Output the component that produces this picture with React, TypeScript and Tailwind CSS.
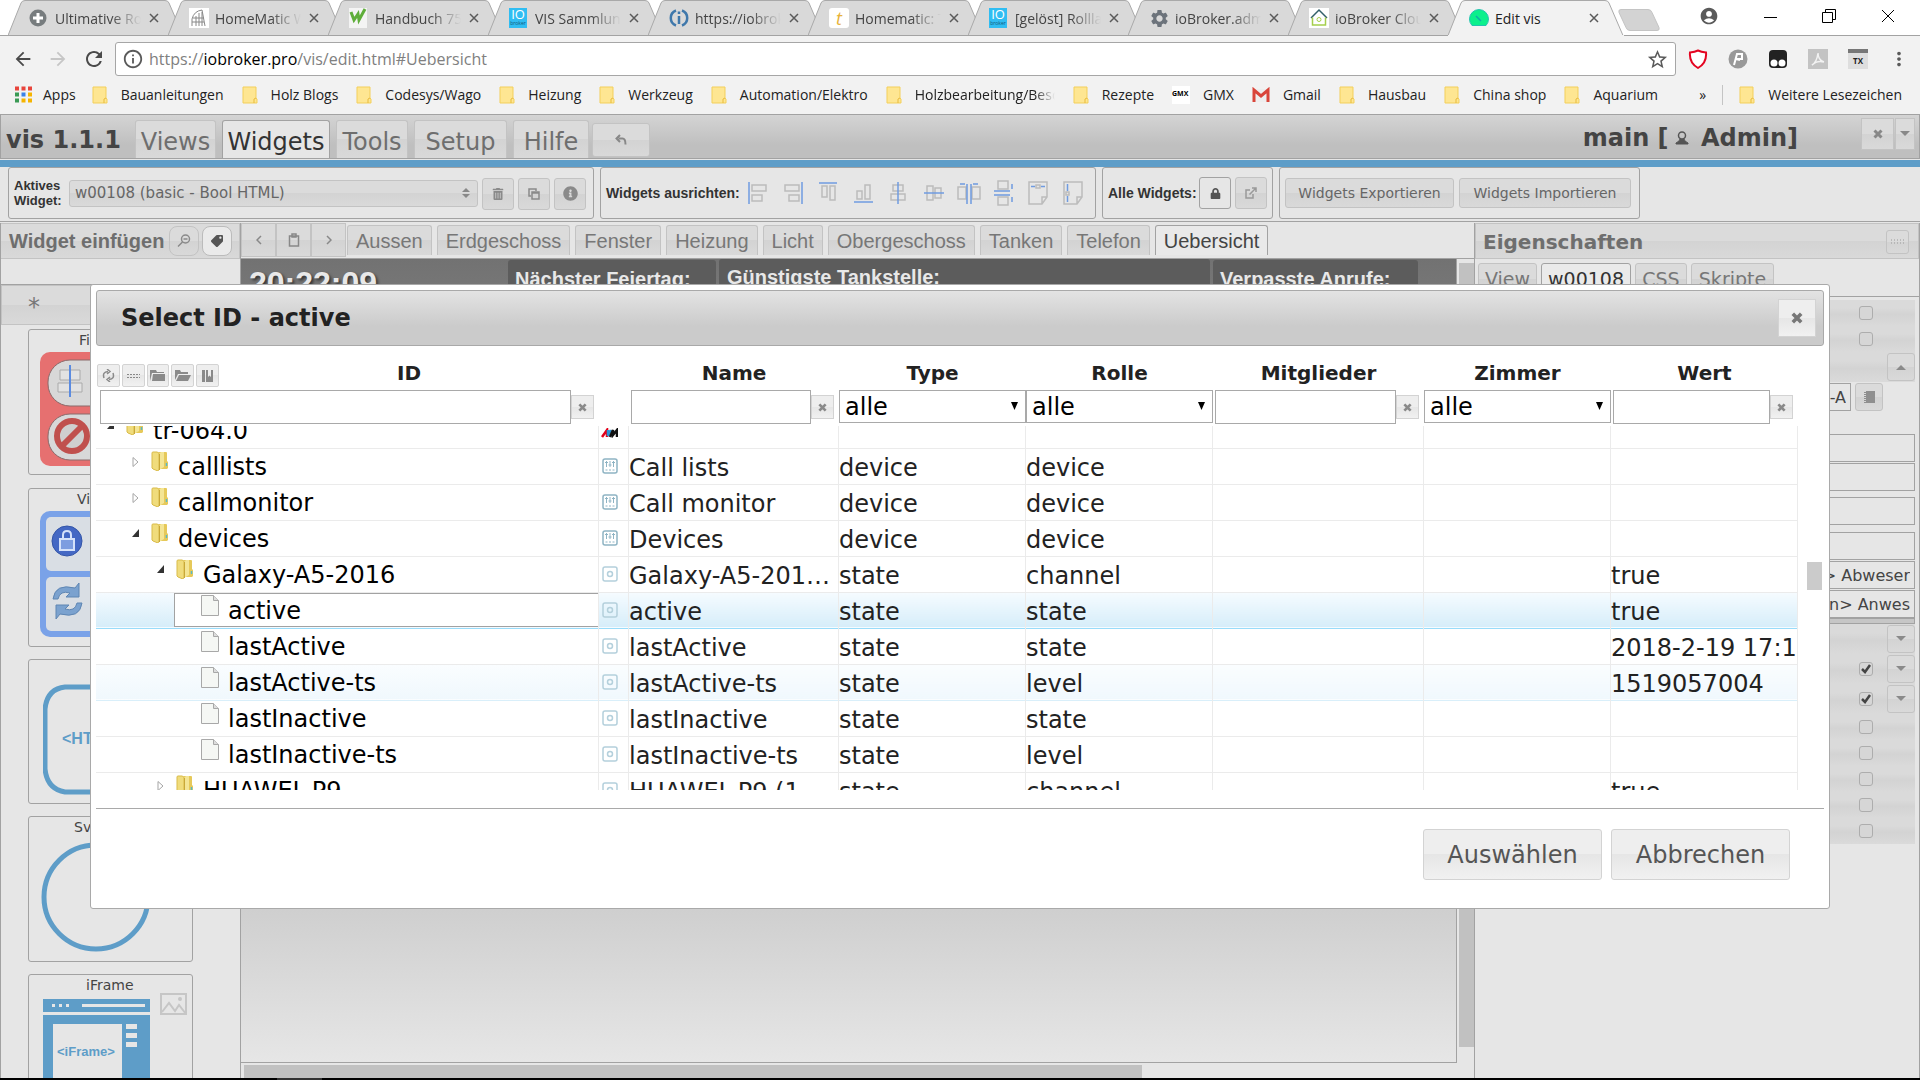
import { ReactNode, useState } from "react";
import { clsx } from "clsx";
import { MdAccountCircle, MdArrowBack, MdArrowForward, MdRefresh, MdInfoOutline, MdStarBorder, MdMoreVert, MdSettings } from "react-icons/md";
import { FaTrashAlt, FaInfoCircle, FaLock, FaTag } from "react-icons/fa";

const glass = "bg-[linear-gradient(#dbdbdb_50%,#d3d3d3_50%,#d9d9d9)] border border-[#c3c3c3]";
const lightGlass = "bg-[linear-gradient(#eeeeee_50%,#e6e6e6_50%,#f1f1f1)] border border-[#d3d3d3]";

const browserTabs = [
  { title: "Ultimative Rollladen", icon: "plus" },
  { title: "HomeMatic WebUI", icon: "arch" },
  { title: "Handbuch 75", icon: "w" },
  { title: "VIS Sammlung", icon: "io" },
  { title: "https://iobroker", icon: "info" },
  { title: "Homematic: T", icon: "t" },
  { title: "[gelöst] Rollladen", icon: "io" },
  { title: "ioBroker.admin", icon: "gear" },
  { title: "ioBroker Cloud", icon: "house" },
  { title: "Edit vis", icon: "vis", active: true },
];

const bookmarks = [
  { name: "Bauanleitungen" },
  { name: "Holz Blogs" },
  { name: "Codesys/Wago" },
  { name: "Heizung" },
  { name: "Werkzeug" },
  { name: "Automation/Elektro" },
  { name: "Holzbearbeitung/Besch", fade: true },
  { name: "Rezepte" },
  { name: "GMX", icon: "gmx" },
  { name: "Gmail", icon: "gmail" },
  { name: "Hausbau" },
  { name: "China shop" },
  { name: "Aquarium" },
];

const menuTabs = [
  { name: "Views", width: "w-[81px]" },
  { name: "Widgets", width: "w-[108px]" },
  { name: "Tools", width: "w-[72px]" },
  { name: "Setup", width: "w-[93px]" },
  { name: "Hilfe", width: "w-[76px]" },
];

const viewTabs = ["Aussen", "Erdgeschoss", "Fenster", "Heizung", "Licht", "Obergeschoss", "Tanken", "Telefon", "Uebersicht"];

type Row = {
  id: string;
  level: number;
  open?: boolean;
  leaf?: boolean;
  kind: "avm" | "device" | "state";
  name: string;
  type: string;
  role: string;
  value: string;
};

const rows: Row[] = [
  { id: "tr-064.0", level: 0, open: true, kind: "avm", name: "", type: "", role: "", value: "" },
  { id: "calllists", level: 1, kind: "device", name: "Call lists", type: "device", role: "device", value: "" },
  { id: "callmonitor", level: 1, kind: "device", name: "Call monitor", type: "device", role: "device", value: "" },
  { id: "devices", level: 1, open: true, kind: "device", name: "Devices", type: "device", role: "device", value: "" },
  { id: "Galaxy-A5-2016", level: 2, open: true, kind: "state", name: "Galaxy-A5-2016 (1", type: "state", role: "channel", value: "true" },
  { id: "active", level: 3, leaf: true, kind: "state", name: "active", type: "state", role: "state", value: "true" },
  { id: "lastActive", level: 3, leaf: true, kind: "state", name: "lastActive", type: "state", role: "state", value: "2018-2-19 17:16" },
  { id: "lastActive-ts", level: 3, leaf: true, kind: "state", name: "lastActive-ts", type: "state", role: "level", value: "1519057004" },
  { id: "lastInactive", level: 3, leaf: true, kind: "state", name: "lastInactive", type: "state", role: "state", value: "" },
  { id: "lastInactive-ts", level: 3, leaf: true, kind: "state", name: "lastInactive-ts", type: "state", role: "level", value: "" },
  { id: "HUAWEI_P9", level: 2, kind: "state", name: "HUAWEI_P9 (1", type: "state", role: "channel", value: "true" },
];

const indents = ["pl-[10px]", "pl-[35px]", "pl-[60px]", "pl-[85px]"];

function Favicon({ icon }: { icon: string }) {
  switch (icon) {
    case "plus":
      return (
        <svg width="18" height="18" viewBox="0 0 18 18">
          <circle cx="9" cy="9" r="8.5" fill="#777c7e" />
          <path d="M9 4v10M4 9h10" stroke="#fff" strokeWidth="3" />
        </svg>
      );
    case "arch":
      return (
        <svg width="20" height="20" viewBox="0 0 20 20">
          <rect width="20" height="20" fill="#fff" />
          <path d="M3 18V11Q5 3 13 2l3 16M7 18V8M10 18V5M13 18V4M3 14h12M4 10h11" stroke="#888" fill="none" />
        </svg>
      );
    case "w":
      return (
        <svg width="18" height="20" viewBox="0 0 18 20">
          <rect width="18" height="20" fill="#f4f4f4" />
          <path d="M2 4l3 8 4-6 1 6 6-11" stroke="#5fae3a" strokeWidth="3" fill="none" />
        </svg>
      );
    case "io":
      return (
        <span className="flex h-5 w-[18px] flex-col items-center bg-[#30bdf2] text-white">
          <span className="text-[13px] leading-[13px]">IO</span>
          <span className="text-[5px] leading-[5px] text-[#125b7c]">broker</span>
        </span>
      );
    case "info":
      return (
        <svg width="20" height="20" viewBox="0 0 20 20" fill="none" stroke="#3f78ab">
          <path d="M7 2.5a8 8 0 0 0 0 15M13 2.500a8 8 0 0 1 0 15" strokeWidth="2.500" />
          <path d="M10 8v8M10 3.500v2.500" strokeWidth="2.500" />
        </svg>
      );
    case "t":
      return (
        <span className="flex h-5 w-5 items-center justify-center rounded-[3px] bg-white text-[18px] leading-[18px] italic text-[#e8b33a]">t</span>
      );
    case "gear":
      return <MdSettings size={21} color="#6c737b" />;
    case "house":
      return (
        <svg width="20" height="20" viewBox="0 0 20 20" fill="none">
          <rect width="20" height="20" fill="#fff" />
          <path d="M2 10l8-8 8 8" stroke="#32606a" strokeWidth="1.500" />
          <path d="M3.500 9.500V17h13V9.500" stroke="#a5cf4c" strokeWidth="1.500" />
          <circle cx="10" cy="11.500" r="2" stroke="#a5cf4c" />
        </svg>
      );
    default:
      return (
        <svg width="20" height="20" viewBox="0 0 20 20">
          <path d="M3 17.500a9.500 9.500 0 1 1 14 0z" fill="#0bf08c" stroke="#22c3b0" />
          <path d="M7 8l5 5" stroke="#1aa" strokeWidth="1.500" />
        </svg>
      );
  }
}

function BookmarkFolder() {
  return (
    <svg width="16" height="18" viewBox="0 0 16 18" className="flex-none">
      <path d="M1 1h13v11l1 1v4H1z" fill="#fee692" stroke="#f3cf5a" />
      <path d="M12 17v-4l2-1" fill="none" stroke="#e8bb3c" />
    </svg>
  );
}

function CloseX({ size = 10 }: { size?: number }) {
  return (
    <svg width={size} height={size} viewBox="0 0 10 10" className="mx-auto">
      <path d="M1.500 1.500l7 7M8.500 1.500l-7 7" stroke="currentColor" strokeWidth="3" />
    </svg>
  );
}

function Triangle({ up }: { up?: boolean }) {
  return (
    <svg width="10" height="6" viewBox="0 0 10 6" className="mx-auto">
      <path d={up ? "M0 6l5-5 5 5z" : "M0 0l5 5 5-5z"} fill="currentColor" />
    </svg>
  );
}

function BrowserTab({ title, icon, active }: { title: string; icon: string; active?: boolean }) {
  return (
    <div className={clsx("relative h-9 w-40 min-w-0", active ? "z-10" : "")}>
      <svg width="176" height="36" viewBox="0 0 176 36" className="absolute top-0 left-0">
        <path d="M0 35.500L13 3Q14 .5 17 .5H157Q160 .5 161 3L175 35.500" fill={active ? "#f2f2f2" : "#d9d9d9"} stroke="#a9a9a9" />
        <path d="M0 35.500H176" stroke={active ? "#f2f2f2" : "#a3a3a3"} />
      </svg>
      <div className="relative flex h-full items-center pl-[21px]">
        <span className="w-[26px]"><Favicon icon={icon} /></span>
        <span className={clsx("w-[86px] overflow-hidden text-[14px] whitespace-nowrap", active ? "text-[#222]" : "text-[#444] [mask-image:linear-gradient(to_right,black_65%,transparent)]")}>
          {title}
        </span>
        <button aria-label="Tab schließen" className="ml-2 text-[#5a5a5a]">
          <svg width="10" height="10" viewBox="0 0 10 10"><path d="M1 1l8 8M9 1l-8 8" stroke="currentColor" strokeWidth="1.500" /></svg>
        </button>
      </div>
    </div>
  );
}

function Browser() {
  return (
    <div className="font-['Open_Sans',sans-serif] text-[14px] text-[#222]">
      <div className="flex h-9 border-b border-[#a3a3a3] bg-white pl-2">
        {browserTabs.map((tab) => (
          <BrowserTab key={tab.title} {...tab} />
        ))}
        <svg width="44" height="24" viewBox="0 0 44 24" className="mt-2 ml-[9px]">
          <path d="M4 1.500h27q3 0 4 3l7 15q1 3-2 3H13q-3 0-4-3L2 4.500q-1-3 2-3z" fill="#d3d3d3" stroke="#c4c4c4" />
        </svg>
        <div className="ml-auto flex items-center pr-[25px] pb-[3px] text-black">
          <MdAccountCircle size={20} color="#5a5a5a" />
          <button aria-label="Minimieren" className="ml-[45px]"><svg width="13" height="13"><path d="M0 7.500h13" stroke="#000" /></svg></button>
          <button aria-label="Verkleinern" className="ml-[45px]">
            <svg width="14" height="14" fill="none" stroke="#000"><path d="M.5 3.500h10v10H.5zM3.500 3V.5h10v10H11" /></svg>
          </button>
          <button aria-label="Schließen" className="ml-[45px]"><svg width="14" height="14"><path d="M1 1l12 12M13 1L1 13" stroke="#000" /></svg></button>
        </div>
      </div>

      <div className="flex h-[42px] items-center bg-[#f2f2f2] pt-1 pr-[10px] pl-3">
        <button aria-label="Zurück" className="mr-[13px]"><MdArrowBack size={22} color="#4a4a4a" /></button>
        <button aria-label="Vor" className="mr-[13px]"><MdArrowForward size={22} color="#c6c6c6" /></button>
        <button aria-label="Neu laden" className="mr-[9px]"><MdRefresh size={24} color="#4a4a4a" /></button>
        <div className="flex h-[34px] flex-1 items-center rounded-[3px] border border-[#a6a6a6] bg-white px-[6px]">
          <MdInfoOutline size={22} color="#5a5a5a" />
          <span className="ml-[5px] text-[16px] leading-[22px] text-[#808080]">
            https://<span className="text-black">iobroker.pro</span>/vis/edit.html#Uebersicht
          </span>
          <MdStarBorder size={23} color="#5a5a5a" className="ml-auto" />
        </div>
        <div className="ml-3 flex items-center gap-[20px]">
          <svg width="20" height="20" viewBox="0 0 20 20"><path d="M10 1.500Q13 3 18 3.500 19 14 10 19 1 14 2 3.500 7 3 10 1.500z" fill="#fff" stroke="#e40521" strokeWidth="2" /></svg>
          <svg width="20" height="20" viewBox="0 0 20 20"><circle cx="10" cy="10" r="9.500" fill="#999" /><path d="M6 16L9 5h6M8 10h6v-4M8 10l4 1" stroke="#fff" strokeWidth="2" fill="none" /></svg>
          <svg width="20" height="20" viewBox="0 0 20 20"><rect x="1" y="1" width="18" height="18" rx="4" fill="#222" /><circle cx="6" cy="14" r="3.500" fill="#fff" /><circle cx="14" cy="14" r="3.500" fill="#fff" /></svg>
          <svg width="20" height="20" viewBox="0 0 20 20"><rect width="20" height="20" fill="#c3c3c3" /><path d="M4 16q5-3 6-12 0 7 6 9-7-2-12 3z" stroke="#f2f2f2" strokeWidth="1.500" fill="none" /></svg>
          <span className="flex h-5 w-5 items-center justify-center border-t-4 border-[#777] bg-[#dedede] text-[8px] font-bold">TX</span>
          <MdMoreVert size={22} color="#5a5a5a" />
        </div>
      </div>

      <div className="flex h-9 items-center bg-[#f2f2f2] pr-[18px] pb-[3px] pl-[15px]">
        <svg width="17" height="17" viewBox="0 0 17 17" className="mr-[11px]">
          <path d="M0 2.500h17" stroke="#e8453c" strokeWidth="4" strokeDasharray="4 2.500" />
          <path d="M0 8.500h17" stroke="#3a9a55" strokeWidth="4" strokeDasharray="4 20" />
          <path d="M6.500 8.500h4" stroke="#3b82e8" strokeWidth="4" />
          <path d="M13 8.500h4M6.500 14.500h10.500" stroke="#f5b400" strokeWidth="4" strokeDasharray="4 2.500" />
          <path d="M0 14.500h4" stroke="#3a9a55" strokeWidth="4" />
        </svg>
        <a href="#apps" className="mr-4">Apps</a>
        {bookmarks.map((mark) => (
          <a key={mark.name} href={"#" + mark.name} className="mr-[18px] flex items-center gap-[13px] whitespace-nowrap">
            {mark.icon === "gmx" && <span className="flex h-[18px] w-[18px] items-center bg-white text-[7px] font-bold text-black">GMX</span>}
            {mark.icon === "gmail" && (
              <svg width="18" height="16" viewBox="0 0 18 16">
                <path d="M1 2h16v13H1z" fill="#eee" />
                <path d="M2 15V3l7 6 7-6v12" stroke="#d9453a" strokeWidth="3" fill="none" />
              </svg>
            )}
            {!mark.icon && <BookmarkFolder />}
            <span className={mark.fade ? "w-[140px] overflow-hidden [mask-image:linear-gradient(to_right,black_85%,transparent)]" : ""}>{mark.name}</span>
          </a>
        ))}
        <div className="ml-auto flex items-center">
          <span className="mr-4">»</span>
          <span className="mr-4 h-5 w-px bg-[#c4c4c4]" />
          <BookmarkFolder />
          <a href="#weitere" className="ml-[13px] whitespace-nowrap">Weitere Lesezeichen</a>
        </div>
      </div>
    </div>
  );
}

function Header() {
  return (
    <header className="flex h-[45px] items-end border border-[#a2a2a2] bg-[linear-gradient(#d4d4d4,#bfbfbf_70%)] pl-[5px] text-[24px] text-[#6e6e6e]">
      <h1 className="w-[123px] font-bold text-[#444]">vis 1.1.1</h1>
      <nav className="ml-[6px] flex items-end gap-[6px]">
        {menuTabs.map((tab) => (
          <button
            key={tab.name}
            className={clsx("h-[38px] rounded-t-[3px] border-b-0 pt-[3px]", tab.width, tab.name === "Widgets" ? "border border-[#a2a2a2] bg-[#e6e6e6] text-[#333]" : glass)}
          >
            {tab.name}
          </button>
        ))}
        <button aria-label="Rückgängig" className={clsx("mb-px -ml-[3px] h-[34px] w-[58px] rounded-[3px]", glass)}>
          <svg width="12" height="12" viewBox="0 0 12 12" className="mx-auto"><path d="M3.500 4.500h4q3 0 3 6M5 1L1.500 4.500 5 8" fill="none" stroke="#888" strokeWidth="2" /></svg>
        </button>
      </nav>
      <div className="mr-[63px] mb-[2px] ml-auto flex items-center font-bold whitespace-pre text-[#444]">
        main [
        <svg width="14" height="14" viewBox="0 0 14 14" className="mr-1 ml-[6px]" fill="none" stroke="#555"><circle cx="7" cy="4.500" r="3.500" strokeWidth="1.500" /><path d="M5 8q0 2-4 4v1h12v-1q-4-2-4-4" fill="#555" /></svg>
        {" Admin]"}
      </div>
      <div className="mr-1 flex gap-px self-start pt-[3px] text-[#888]">
        <button aria-label="Schließen" className={clsx("h-8 w-[33px]", glass)}><CloseX /></button>
        <button aria-label="Menü" className={clsx("h-8 w-5", glass)}><Triangle /></button>
      </div>
    </header>
  );
}

/* boxes and guide lines of the ten align actions */
const alignIcons = [
  { box: "M5 5h14v6H5zM5 15h10v6H5z", line: "M2 2v22" },
  { box: "M3 5h14v6H3zM7 15h10v6H7z", line: "M20 2v22" },
  { box: "M5 6h5v11H5zM13 6h5v14h-5z", line: "M2 3h18" },
  { box: "M5 11h5v8H5zM13 5h5v14h-5z", line: "M2 22h19" },
  { box: "M6 5h10v6H6zM4 14h14v6H4z", line: "M11 2v22" },
  { box: "M5 6h6v14H5zM13 8h6v10h-6z", line: "M2 13h20" },
  { box: "M1 7h8v12H1zM15 7h8v12h-8z", line: "M10 4v20M14 4v20M3 4h5M21 4h-5" },
  { box: "M6 1h10v8H6zM6 17h10v8H6z", line: "M2 11h16M2 15h16M20 4v5M20 22v-5" },
  { box: "M2 2h18v15l-5 7H2zM20 17h-5v7M9 5h4v3H9z", line: "M4 6.500h4M14 6.500h4" },
  { box: "M2 2h18v15l-5 7H2zM20 17h-5v7M4 12h3v3H4z", line: "M5.500 4v7M5.500 16v6" },
];

function Toolbar() {
  return (
    <div className="flex h-[55px] gap-[6px] border-b border-[#a2a2a2] bg-[#e6e6e6] pl-2 text-[#666]">
      <div className="flex h-[52px] w-[586px] items-center gap-1 rounded-[3px] border border-[#a2a2a2] pr-[7px] pl-[5px]">
        <label htmlFor="widget" className="w-[51px] font-['Liberation_Sans',Arial,sans-serif] text-[13px] leading-[15px] font-bold text-[#333]">Aktives Widget:</label>
        <div className="relative flex-1">
          <select id="widget" className={clsx("h-[27px] w-full appearance-none rounded-[3px] pl-[5px] text-[15px]", glass)}>
            <option>w00108 (basic - Bool HTML)</option>
          </select>
          <svg width="8" height="10" viewBox="0 0 8 10" className="pointer-events-none absolute top-2 right-2"><path d="M0 4l4-4 4 4zM0 6l4 4 4-4z" fill="#888" /></svg>
        </div>
        <div className="flex gap-1 pt-px text-[#8a8a8a]">
          <button aria-label="Löschen" className={clsx("flex h-8 w-8 items-center justify-center rounded-[3px]", glass)}><FaTrashAlt size={12} /></button>
          <button aria-label="Kopieren" className={clsx("flex h-8 w-8 items-center justify-center rounded-[3px]", glass)}>
            <svg width="12" height="12" viewBox="0 0 12 12" fill="none" stroke="currentColor" strokeWidth="1.500"><path d="M3 8H1V1h7v2" /><path d="M4 4h7v7H4zM4 5h7" /></svg>
          </button>
          <button aria-label="Info" className={clsx("flex h-8 w-8 items-center justify-center rounded-[3px]", glass)}><FaInfoCircle size={15} /></button>
        </div>
      </div>
      <div className="flex h-[52px] w-[496px] items-center rounded-[3px] border border-[#a2a2a2] pl-[5px]">
        <span className="w-[141px] font-['Liberation_Sans',Arial,sans-serif] text-[14px] font-bold text-[#333]">Widgets ausrichten:</span>
        <div className="flex gap-[11px]">
          {alignIcons.map((icon) => (
            <button key={icon.box} aria-label="Ausrichten">
              <svg width="24" height="26" viewBox="0 0 24 26" fill="none">
                <path d={icon.box} stroke="#bcbcbc" strokeWidth="1.500" />
                <path d={icon.line} stroke="#6f9be0" strokeWidth="1.500" />
              </svg>
            </button>
          ))}
        </div>
      </div>
      <div className="flex h-[52px] w-[171px] items-center gap-1 rounded-[3px] border border-[#a2a2a2] pl-[5px]">
        <span className="w-[87px] font-['Liberation_Sans',Arial,sans-serif] text-[14px] font-bold whitespace-nowrap text-[#333]">Alle Widgets:</span>
        <button aria-label="Sperren" className="flex h-8 w-8 items-center justify-center rounded-[3px] border border-[#a2a2a2] bg-[#e6e6e6] text-[#555]"><FaLock size={11} /></button>
        <button aria-label="Extern öffnen" className={clsx("flex h-8 w-8 items-center justify-center rounded-[3px] text-[#999]", glass)}>
          <svg width="12" height="12" viewBox="0 0 12 12" fill="none" stroke="currentColor" strokeWidth="1.500"><path d="M5 3H1v8h7V7M4.500 7.500L11 1M7 1h4v4" /></svg>
        </button>
      </div>
      <div className="flex h-[52px] w-[361px] items-center gap-[5px] rounded-[3px] border border-[#a2a2a2] pl-[5px] text-[14px]">
        <button className={clsx("h-[30px] w-[169px] rounded-[3px]", glass)}>Widgets Exportieren</button>
        <button className={clsx("h-[30px] w-[172px] rounded-[3px]", glass)}>Widgets Importieren</button>
      </div>
    </div>
  );
}

function WidgetCard({ label, className, children }: { label?: ReactNode; className: string; children: ReactNode }) {
  return (
    <div className={clsx("ml-[27px] w-[165px] flex-none overflow-hidden rounded-[3px] border border-[#a2a2a2] text-[14px] leading-[20px] text-[#444]", className)}>
      <div className="h-5">{label}</div>
      {children}
    </div>
  );
}

function WidgetPanel() {
  return (
    <aside className="flex w-[241px] flex-none flex-col overflow-hidden border-r border-l border-[#a2a2a2] bg-[#e6e6e6]">
      <div className={clsx("flex h-9 flex-none items-center gap-[3px] border-l-0 pl-2 text-[#777]", glass)}>
        <h2 className="w-[157px] font-['Liberation_Sans',Arial,sans-serif] text-[20px] font-bold text-[#6e6e6e]">Widget einfügen</h2>
        <button aria-label="Filter" className={clsx("flex h-[30px] w-[30px] items-center justify-center rounded-lg", glass)}>
          <svg width="14" height="14" viewBox="0 0 14 14" fill="none" stroke="#8a8a8a" strokeWidth="1.500"><circle cx="8.500" cy="5" r="4" /><path d="M6.500 5h4M5.500 8L1 12.500" /></svg>
        </button>
        <button aria-label="Tags" className="flex h-[30px] w-[30px] items-center justify-center rounded-lg border border-[#bbb] bg-[#eaeaea] text-[#555]"><FaTag size={12} className="-scale-x-100" /></button>
      </div>
      <div className="h-[26px] flex-none border-b border-[#a2a2a2]" />
      <div className={clsx("h-10 flex-none pl-[26px] text-[24px] leading-[42px] text-[#777]", glass)}>*</div>
      <WidgetCard className="mt-1 h-[146px]" label={<span className="pl-[50px]">Fi</span>}>
        <svg width="120" height="116" viewBox="0 0 120 116" className="mt-[2px] ml-[11px]">
          <rect width="110" height="114" rx="10" fill="#e67070" />
          <rect x="8" y="8" width="100" height="46" rx="22" fill="#d8d8d8" stroke="#8a6a6a" />
          <rect x="8" y="62" width="100" height="46" rx="22" fill="#d8d8d8" stroke="#8a6a6a" />
          <path d="M20 18h20v10H20zM18 31h24v9H18z" fill="#e2e2e2" stroke="#aaa" />
          <path d="M30 13v32" stroke="#5b8be0" strokeWidth="2" />
          <circle cx="32" cy="84" r="15" fill="#cfcfcf" stroke="#c0504d" strokeWidth="6" />
          <path d="M22 94l20-20" stroke="#c0504d" strokeWidth="6" />
        </svg>
      </WidgetCard>
      <WidgetCard className="mt-[13px] h-[159px]" label={<span className="pl-12">Vi</span>}>
        <svg width="120" height="128" viewBox="0 0 120 128" className="mt-[2px] ml-[11px]">
          <rect width="110" height="126" rx="10" fill="#7aa2e8" />
          <rect x="6" y="6" width="98" height="54" rx="5" fill="#d9dee4" />
          <rect x="6" y="66" width="98" height="54" rx="5" fill="#d9dee4" />
          <circle cx="27" cy="30" r="15" fill="#4468c4" stroke="#3355a8" />
          <rect x="20" y="28" width="14" height="11" fill="#7d9de0" stroke="#d5e2fa" strokeWidth="2" />
          <path d="M23 28v-4q0-4 4-4t4 4v4" stroke="#d5e2fa" strokeWidth="2" fill="none" />
          <path d="M13 88q2-16 22-11l4-5v14H26l4-4q-10-3-12 6zM42 92q-2 16-22 11l-4 5V94h13l-4 4q10 3 12-6z" fill="#7ba2cf" stroke="#5f86b3" />
        </svg>
      </WidgetCard>
      <WidgetCard className="mt-3 h-[145px]">
        <svg width="125" height="112" viewBox="0 0 125 112" className="mt-1 ml-[14px]">
          <path d="M22 3h66q18 2 19 22v60q-1 20-19 23H22Q4 105 2 85V25Q4 5 22 3z" fill="none" stroke="#5e9dc8" strokeWidth="5" />
          <text x="19" y="60" fill="#5e9dc8" fontSize="16" fontWeight="bold" fontFamily="Liberation Sans">&lt;HTML&gt;</text>
        </svg>
      </WidgetCard>
      <WidgetCard className="mt-3 h-[146px]" label={<span className="pl-[45px]">Sv</span>}>
        <svg width="112" height="114" viewBox="0 0 112 114" className="mt-1 ml-3">
          <circle cx="55" cy="56" r="52" fill="none" stroke="#5e9dc8" strokeWidth="5" />
        </svg>
      </WidgetCard>
      <WidgetCard className="mt-3 h-[146px]" label={<span className="pl-[57px]">iFrame</span>}>
        <div className="flex gap-2 pl-[14px]">
          <svg width="109" height="90" viewBox="0 0 109 90" className="mt-1" fill="#5e9dc8">
            <path d="M0 0h107v13H0zM0 16h107v80H0z" />
            <path d="M39 5h63v3H39zM9 5h3v3H9zM16 5h3v3h-3zM23 5h3v3h-3zM10 25h69v54H10zM83 25h11v5H83zM83 34h11v5H83zM83 43h11v5H83z" fill="#e6e6e6" />
            <text x="14" y="57" fontSize="13" fontWeight="bold" fontFamily="Liberation Sans">&lt;iFrame&gt;</text>
          </svg>
          <svg width="27" height="22" viewBox="0 0 27 22" fill="none" stroke="#c6c6c6" strokeWidth="2" className="-mt-[2px]">
            <path d="M1 1h25v20H1zM2 19l7-9 6 8 4-6 7 9" /><circle cx="20" cy="6" r="1" />
          </svg>
        </div>
      </WidgetCard>
    </aside>
  );
}

function ViewArea() {
  return (
    <main className="flex min-w-0 flex-1 flex-col bg-[#e6e6e6] font-['Liberation_Sans',Arial,sans-serif] text-[20px] text-[#777]">
      <div className="flex h-9 flex-none items-end border-b border-[#a2a2a2]">
        <div className="flex self-start text-[#888]">
          <button aria-label="Vorherige" className={clsx("h-[34px] w-[35px]", glass)}><svg width="6" height="10" className="mx-auto"><path d="M5 1L1 5l4 4" fill="none" stroke="currentColor" strokeWidth="1.500" /></svg></button>
          <button aria-label="Zwischenablage" className={clsx("h-[34px] w-[35px]", glass)}>
            <svg width="12" height="14" viewBox="0 0 12 14" className="mx-auto" fill="none" stroke="currentColor" strokeWidth="1.500"><path d="M1.500 3h9v10h-9zM4 1h4v3H4z" /></svg>
          </button>
          <button aria-label="Nächste" className={clsx("h-[34px] w-[35px]", glass)}><svg width="6" height="10" className="mx-auto"><path d="M1 1l4 4-4 4" fill="none" stroke="currentColor" strokeWidth="1.500" /></svg></button>
        </div>
        <div className="ml-px flex gap-[5px] pb-[3px]">
          {viewTabs.map((tab) => (
            <button key={tab} className={clsx("h-[30px] rounded-t-[3px] border-b-0 px-2", tab === "Uebersicht" ? "border border-[#a2a2a2] bg-[#e9e9e9] text-[#444]" : glass)}>
              {tab}
            </button>
          ))}
        </div>
      </div>
      <div className="flex min-h-0 flex-1">
        <div className="flex min-w-0 flex-1 items-start border-r border-b border-[#a2a2a2] bg-[linear-gradient(#727272,#cfcfcf_81%,#e6e6e6)] pr-[38px] font-bold text-[#e8e8e8]">
          <div className="w-[267px] flex-none pt-[6px] pl-2 text-[32px] leading-[36px] [text-shadow:2px_2px_3px_#333]">20:22:09</div>
          <div className="mt-px h-20 w-[208px] flex-none rounded-[3px] bg-[#5c5c5c] px-[7px] pt-1">Nächster Feiertag:</div>
          <div className="mx-[3px] h-20 flex-1 rounded-[3px] bg-[#5c5c5c] px-2 pt-[3px]">Günstigste Tankstelle:</div>
          <div className="mt-px h-20 w-[205px] flex-none rounded-[3px] bg-[#5c5c5c] px-[7px] pt-1">Verpasste Anrufe:</div>
        </div>
        <div className="w-[17px] pt-1 pb-4 pl-[2px]"><div className="h-full bg-[#c1c1c1]" /></div>
      </div>
      <div className="h-[15px] pt-[2px] pl-[3px]"><div className="h-full w-[73%] bg-[#c1c1c1]" /></div>
    </main>
  );
}

function PropCheck({ checked }: { checked?: boolean }) {
  return (
    <span className="relative h-[14px] w-[14px]">
      <input type="checkbox" aria-label="Eigenschaft" defaultChecked={checked} className="peer block h-[14px] w-[14px] appearance-none rounded-[3px] border border-[#adadad] bg-[#d6d6d6]" />
      <svg width="12" height="12" viewBox="0 0 12 12" className="pointer-events-none absolute top-px left-px hidden peer-checked:block"><path d="M2 6l3 3 5-7" stroke="#444" strokeWidth="2.500" fill="none" /></svg>
    </span>
  );
}

function PropRow({ arrow, check, className }: { arrow?: "up" | "down"; check?: boolean; className: string }) {
  return (
    <div className={clsx("flex items-center justify-end gap-[14px] bg-[linear-gradient(#dadada_30%,#d3d3d3_55%,#dadada)]", className)}>
      {check !== undefined && <PropCheck checked={check} />}
      <span className="w-7 text-[#8a8a8a]">
        {arrow && <button aria-label="Verschieben" className={clsx("block h-7 w-7 rounded-[3px]", glass)}><Triangle up={arrow === "up"} /></button>}
      </span>
    </div>
  );
}

function PropInput({ value, className }: { value?: string; className?: string }) {
  return <input aria-label="Wert" defaultValue={value} className={clsx("block h-7 w-full border border-[#a2a2a2] bg-[#e6e6e6] px-1 text-right text-[16px] text-[#444]", className)} />;
}

function PropertyPanel() {
  return (
    <aside className="flex w-[446px] flex-none flex-col border-r border-l border-[#a2a2a2] bg-[#e6e6e6] text-[19px] text-[#777]">
      <div className={clsx("flex h-9 items-center justify-between pt-px pr-[9px] pl-[7px]", glass)}>
        <h2 className="text-[20px] font-bold text-[#6e6e6e]">Eigenschaften</h2>
        <button aria-label="Ausblenden" className={clsx("h-6 w-[23px] rounded-[3px]", glass)}>
          <svg width="13" height="5" className="mx-auto"><path d="M0 1h13M0 4h13" stroke="#999" strokeDasharray="1 2" /></svg>
        </button>
      </div>
      <div className="flex h-[38px] gap-1 border-b border-[#a2a2a2] pt-1 pl-[3px]">
        <button className={clsx("h-full w-[59px] rounded-t-[3px]", glass)}>View</button>
        <button className="h-full w-[90px] rounded-t-[3px] border border-[#a2a2a2] bg-[#eaeaea] text-[#333]">w00108</button>
        <button className={clsx("h-full w-[52px] rounded-t-[3px]", glass)}>CSS</button>
        <button className={clsx("h-full w-[83px] rounded-t-[3px]", glass)}>Skripte</button>
      </div>
      <div className="flex flex-col pt-[3px] pr-1 pl-1">
        <PropRow check={false} className="h-[26px]" />
        <PropRow check={false} className="h-[26px]" />
        <PropRow arrow="up" className="h-[30px]" />
        <div className="flex gap-1 pt-px pr-8">
          <PropInput value="-A" />
          <button aria-label="ID wählen" className={clsx("h-7 w-7 flex-none rounded-[3px]", glass)}>
            <svg width="11" height="12" className="mx-auto"><path d="M2 0h9v12H2z" fill="#8f8f8f" /><path d="M1 1v11" stroke="#8f8f8f" strokeWidth="2" strokeDasharray="1 1" /></svg>
          </button>
        </div>
        <PropInput className="mt-[23px]" />
        <PropInput className="mt-px" />
        <PropInput className="mt-[6px]" />
        <PropInput className="mt-[7px]" />
        <PropInput className="mt-px" value="> Abweser" />
        <PropInput className="mt-px" value="en> Anwes" />
        <div className="h-[6px] border border-[#a2a2a2] bg-[#c6c6c6]" />
        <PropRow arrow="down" className="h-[30px]" />
        <PropRow arrow="down" check={true} className="h-[30px]" />
        <PropRow arrow="down" check={true} className="h-[30px]" />
        <PropRow check={false} className="h-[26px]" />
        <PropRow check={false} className="h-[26px]" />
        <PropRow check={false} className="h-[26px]" />
        <PropRow check={false} className="h-[26px]" />
        <PropRow check={false} className="h-[26px]" />
      </div>
    </aside>
  );
}

function Columns() {
  return (
    <colgroup>
      <col />
      <col className="w-[30px]" />
      <col className="w-[210px]" />
      <col className="w-[187px]" />
      <col className="w-[187px]" />
      <col className="w-[211px]" />
      <col className="w-[187px]" />
      <col className="w-[187px]" />
    </colgroup>
  );
}

function FilterInput({ label }: { label: string }) {
  return (
    <div className="flex items-center pr-[5px] pl-[2px]">
      <input aria-label={label} className="h-[34px] min-w-0 flex-1 border border-[#a9a9a9] bg-white px-1 text-[24px]" />
      <button aria-label={label + " leeren"} className={clsx("h-6 w-[23px] flex-none text-[#8a8a8a]", lightGlass)}><CloseX size={9} /></button>
    </div>
  );
}

function FilterSelect({ label }: { label: string }) {
  return (
    <div className="relative">
      <select aria-label={label} className="h-[33px] w-full appearance-none border border-[#a9a9a9] bg-white pl-[5px] text-[24px] leading-[30px] text-black">
        <option>alle</option>
      </select>
      <svg width="7" height="8" className="pointer-events-none absolute top-3 right-2"><path d="M0 0h7L3.500 8z" fill="#000" /></svg>
    </div>
  );
}

function KindIcon({ kind }: { kind: Row["kind"] }) {
  if (kind === "avm") {
    return (
      <svg width="17" height="10" viewBox="0 0 17 10" className="mt-[6px] ml-[2px]" fill="none" strokeWidth="2.500">
        <path d="M1 9l5-7v7" stroke="#e2001a" /><path d="M7 2v6l3-6" stroke="#2a93d5" /><path d="M9 9l3-7v5l4-5v7" stroke="#111" />
      </svg>
    );
  }
  return (
    <svg width="16" height="16" viewBox="0 0 16 16" className="ml-[3px]" fill="none" stroke={kind === "device" ? "#8fb4c4" : "#b4d0dc"}>
      <rect x="1" y="1" width="14" height="14" rx="2" strokeWidth="1.500" />
      {kind === "device" ? <path d="M4.500 3v6M8 3v6M11.500 3v6M3 4.500h3M6.500 7h3M10 4.500h3M3.500 12h2M7 12h2M10.500 12h2" /> : <circle cx="8" cy="8" r="2.500" strokeWidth="1.500" />}
    </svg>
  );
}

function TreeIcon({ leaf }: { leaf?: boolean }) {
  if (leaf) {
    return (
      <svg width="18" height="21" viewBox="0 0 18 21" className="flex-none">
        <path d="M.5.5h12l5 5v15H.5z" fill="#f5f7f4" stroke="#a8a8a8" />
        <path d="M12.500.5v5h5" fill="#ddd" stroke="#a8a8a8" />
      </svg>
    );
  }
  return (
    <svg width="18" height="20" viewBox="0 0 18 20" className="flex-none">
      <path d="M8 1h7q1 0 1 1v8l1 1v6l-1 1H8z" fill="#e6c95a" />
      <path d="M1 2q0-1 1-1h4l2 1v16l-1 2-5-2-1-1z" fill="#f0dc7c" stroke="#d9bb48" />
      <path d="M8 3l2-2h3v15l-5 3z" fill="#f4e595" />
      <path d="M8.500 3v16" stroke="#c9a838" />
      <path d="M15.500 12v3" stroke="#58b9c9" strokeWidth="1.500" />
    </svg>
  );
}

function Expander({ open }: { open?: boolean }) {
  return (
    <svg width="10" height="12" viewBox="0 0 10 12" className="mb-2 flex-none">
      {open ? <path d="M8 1v8H1z" fill="#333" /> : <path d="M2 1.500v9l5-4.500z" fill="#fff" stroke="#a5a5a5" />}
    </svg>
  );
}

function SelectDialog() {
  const [selected, setSelected] = useState("active");

  return (
    <div role="dialog" aria-label="Select ID" className="absolute inset-x-[90px] top-[284px] rounded-[3px] border border-[#a9a9a9] bg-white p-[5px] text-[#222]">
      <div className="flex h-14 items-center justify-between rounded-[3px] border border-[#a9a9a9] bg-[linear-gradient(#e3e3e3,#cbcbcb_65%)] pr-[7px] pl-6">
        <h2 className="text-[24px] font-bold">Select ID - active</h2>
        <button aria-label="Schließen" className={clsx("h-[38px] w-[38px] text-[#777]", lightGlass)}><CloseX size={12} /></button>
      </div>

      <div className="pr-[26px]">
        <table className="mt-[9px] w-full table-fixed">
          <Columns />
          <thead>
            <tr className="h-[35px] text-[20px]">
              <th>
                <div className="flex items-center text-[#8a8a8a]">
                  <div className="flex w-[123px] flex-none gap-[2px] pt-[6px] pl-px">
                    <button aria-label="Aktualisieren" className={clsx("h-[23px] w-[23px] rounded-[2px]", lightGlass)}>
                      <svg width="13" height="13" viewBox="0 0 13 13" className="mx-auto" fill="none" stroke="currentColor" strokeWidth="1.500"><path d="M2 9Q0 3 6 2.500M5 0l3 2.500L5 5M11 4q2 6-4 6.500M8 8l-3 2.500L8 13" /></svg>
                    </button>
                    <button aria-label="Liste" className={clsx("h-[23px] w-[23px] rounded-[2px]", lightGlass)}><svg width="13" height="5" className="mx-auto"><path d="M0 1.500h13M0 4.500h13" stroke="#888" strokeDasharray="2 1" /></svg></button>
                    <button aria-label="Zuklappen" className={clsx("h-[23px] w-[23px] rounded-[2px]", lightGlass)}>
                      <svg width="15" height="13" viewBox="0 0 15 13" className="mx-auto" fill="currentColor"><path d="M0 12V1h6l1 2h7v1H2z" /><path d="M3 5h12v7H2z" /></svg>
                    </button>
                    <button aria-label="Aufklappen" className={clsx("h-[23px] w-[23px] rounded-[2px]", lightGlass)}>
                      <svg width="16" height="13" viewBox="0 0 16 13" className="mx-auto" fill="currentColor"><path d="M0 11V1h5l1 2h7v2H3z" /><path d="M4 6h12l-3 6H1z" /></svg>
                    </button>
                    <button aria-label="Notizen" className={clsx("h-[23px] w-[23px] rounded-[2px]", lightGlass)}>
                      <svg width="11" height="12" viewBox="0 0 11 12" className="mx-auto" fill="currentColor"><path d="M0 0h3v12H0zM4 0h7v12H4z" /><path d="M6 0h3v7L7.500 5.500 6 7z" fill="#eee" /></svg>
                    </button>
                  </div>
                  <span className="flex-1 text-center text-[#222]">ID</span>
                </div>
              </th>
              <th />
              <th>Name</th>
              <th>Type</th>
              <th>Rolle</th>
              <th>Mitglieder</th>
              <th>Zimmer</th>
              <th>Wert</th>
            </tr>
            <tr className="h-9 align-top">
              <td className="pl-[2px]"><FilterInput label="ID" /></td>
              <td />
              <td><FilterInput label="Name" /></td>
              <td><FilterSelect label="Type" /></td>
              <td><FilterSelect label="Rolle" /></td>
              <td><FilterInput label="Mitglieder" /></td>
              <td><FilterSelect label="Zimmer" /></td>
              <td><FilterInput label="Wert" /></td>
            </tr>
          </thead>
        </table>
      </div>

      <div className="flex h-[364px] overflow-hidden">
        <div className="min-w-0 flex-1">
          <table className="-mt-[14px] w-full table-fixed border-collapse text-[24px] leading-[30px]">
            <Columns />
            <tbody>
              {rows.map((row) => {
                const active = row.id === selected;
                const cell = "overflow-hidden border-r border-[#ebebeb] whitespace-nowrap";
                return (
                  <tr
                    key={row.id}
                    onClick={() => setSelected(row.id)}
                    className={clsx("h-9 border-b", {
                      "border-y border-[#99dcfa] bg-[linear-gradient(#f5fbff,#d6edf9)]": active,
                      "border-y border-[#d9effa] bg-[linear-gradient(#fafdff,#f0f8fd)]": row.id === "lastActive-ts" && !active,
                      "border-[#ebebeb]": !active && row.id !== "lastActive-ts",
                    })}
                  >
                    <td className={clsx(cell, "text-black", row.leaf ? "pl-[78px]" : indents[row.level])}>
                      <div className={clsx("flex h-[34px] items-center", active && "border border-r-0 border-[#a2a2a2] bg-white", row.leaf && (active ? "pl-[26px]" : "pl-[27px]"))}>
                        {!row.leaf && <Expander open={row.open} />}
                        <span className={clsx("mb-[10px] flex-none", !row.leaf && "ml-[10px]")}><TreeIcon leaf={row.leaf} /></span>
                        <span className="ml-[9px] pt-[2px]">{row.id}</span>
                      </div>
                    </td>
                    <td className={cell}><KindIcon kind={row.kind} /></td>
                    <td className={clsx(cell, "pt-1 text-ellipsis")}>{row.name}</td>
                    <td className={clsx(cell, "pt-1")}>{row.type}</td>
                    <td className={clsx(cell, "pt-1")}>{row.role}</td>
                    <td className={cell} />
                    <td className={cell} />
                    <td className={clsx(cell, "pt-1")}>{row.value}</td>
                  </tr>
                );
              })}
            </tbody>
          </table>
        </div>
        <div className="flex w-[26px] flex-col pt-[136px] pl-[9px]"><div className="h-7 w-[15px] bg-[#cbcbcb]" /></div>
      </div>

      <div className="mt-[18px] flex h-[95px] justify-end gap-[9px] border-t border-[#a9a9a9] pt-[20px] pr-[34px] text-[24px] text-[#555]">
        <button className={clsx("h-[51px] w-[179px] rounded-[3px]", lightGlass)}>Auswählen</button>
        <button className={clsx("h-[51px] w-[179px] rounded-[3px]", lightGlass)}>Abbrechen</button>
      </div>
    </div>
  );
}

export default function App() {
  return (
    <div className="relative flex h-screen w-full flex-col overflow-hidden bg-[#e6e6e6] font-['DejaVu_Sans',Verdana,sans-serif]">
      <Browser />
      <Header />
      <div className="mt-px h-[7px] flex-none bg-[#5e9dc8]" />
      <Toolbar />
      <div className="flex min-h-0 flex-1 pt-px">
        <WidgetPanel />
        <ViewArea />
        <PropertyPanel />
      </div>
      <div className="h-[2px] flex-none bg-black pl-[277px]"><div className="h-full w-[45px] bg-[#333]" /></div>
      <SelectDialog />
    </div>
  );
}
